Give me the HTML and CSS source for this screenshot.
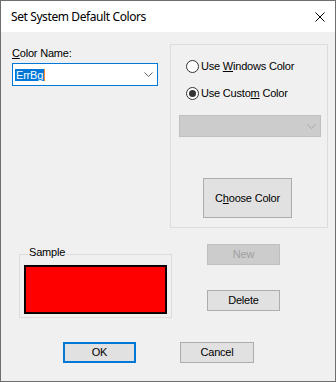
FILE: index.html
```html
<!DOCTYPE html>
<html lang="en">
<head>
  <meta charset="UTF-8" />
  <title>Set System Default Colors</title>
  <link rel="stylesheet" href="styles.css">
</head>
<body>

  <div class="window">
    <!-- TITLE BAR -->
    <div class="titlebar">
      <span class="title">Set System Default Colors</span>
      <svg class="close" width="10" height="10" viewBox="0 0 10 10">
        <path d="M0.5 0.5 L9.5 9.5 M9.5 0.5 L0.5 9.5" stroke="#000" stroke-width="1" fill="none" />
      </svg>
    </div>

    <div class="dialog-body">
      <!-- TOP: name combo + colour source group -->
      <div class="top-row">
        <div class="name-col">
          <div class="field-label"><u>C</u>olor Name:</div>
          <div class="combo focused">
            <span class="combo-text"><span class="selected">ErrBg</span><span class="caret"></span></span>
            <svg class="chevron" width="9" height="5" viewBox="0 0 9 5">
              <polyline points="0.5,0.5 4.5,4.5 8.5,0.5" stroke="#606060" fill="none" />
            </svg>
          </div>
        </div>

        <div class="group source-group">
          <div class="radio-row"><span class="radio"></span><span>Use <u>W</u>indows Color</span></div>
          <div class="radio-row second"><span class="radio checked"></span><span>Use Custo<u>m</u> Color</span></div>
          <div class="combo disabled">
            <svg class="chevron" width="9" height="5" viewBox="0 0 9 5">
              <polyline points="0.5,0.5 4.5,4.5 8.5,0.5" stroke="#a8a8a8" fill="none" />
            </svg>
          </div>
          <button class="btn choose">C<u>h</u>oose Color</button>
        </div>
      </div>

      <!-- MIDDLE: sample + new/delete -->
      <div class="mid-row">
        <div class="group sample-group">
          <span class="group-label">Sample</span>
          <div class="swatch"></div>
        </div>
        <div class="side-buttons">
          <button class="btn" disabled>New</button>
          <button class="btn">Delete</button>
        </div>
      </div>

      <!-- BOTTOM: OK / Cancel -->
      <div class="bottom-row">
        <button class="btn default">OK</button>
        <button class="btn cancel">Cancel</button>
      </div>
    </div>
  </div>

</body>
</html>
```

FILE: styles.css
```css
* {
  margin: 0;
  padding: 0;
  box-sizing: border-box;
}

body {
  background: #ffffff;
  font-family: "Liberation Sans", Arial, sans-serif;
  font-size: 11px;
  line-height: 13px;
  letter-spacing: -0.2px;
  color: #000;
}

u {
  text-decoration: underline;
  text-underline-offset: 1px;
}

.window {
  width: 336px;
  height: 382px;
  border: 1px solid #6e6e6e;
  background: #f0f0f0;
}

.titlebar {
  height: 31px;
  background: #ffffff;
  display: flex;
  align-items: center;
  justify-content: space-between;
  padding: 0 10px 0 10px;
}

.title {
  font-family: "Segoe UI", "Noto Sans", sans-serif;
  font-size: 12px;
  letter-spacing: -0.4px;
}

.dialog-body {
  padding: 12px 7px 0 11px;
}

/* top row */
.top-row {
  display: flex;
  gap: 12px;
}

.name-col {
  width: 146px;
  padding-top: 3px;
}

.field-label {
  height: 13px;
}

.combo {
  display: flex;
  align-items: center;
  justify-content: space-between;
  background: #fff;
  border: 1px solid #7a7a7a;
}

.combo.focused {
  margin-top: 3px;
  height: 23px;
  border-color: #0078d7;
  padding: 0 4px 0 2px;
}

.combo-text {
  display: flex;
  align-items: center;
}

.selected {
  background: #0078d7;
  color: #fff;
  padding: 0 1px;
  line-height: 12px;
}

.caret {
  width: 1px;
  height: 12px;
  background: #ff8728;
}

.combo.disabled {
  margin-top: 14px;
  width: 142px;
  height: 22px;
  background: #cccccc;
  border-color: #bfbfbf;
  justify-content: flex-end;
  padding-right: 4px;
}

.group {
  border: 1px solid #dcdcdc;
}

.source-group {
  width: 158px;
  height: 184px;
  padding: 13px 0 0 8px;
}

.radio-row {
  display: flex;
  align-items: center;
  gap: 2px;
  height: 16px;
  margin-left: 7px;
}

.radio-row.second {
  margin-top: 11px;
}

.radio {
  width: 13px;
  height: 13px;
  border: 1px solid #333;
  border-radius: 50%;
  background: #fff;
  display: flex;
  align-items: center;
  justify-content: center;
}

.radio.checked::after {
  content: "";
  width: 7px;
  height: 7px;
  border-radius: 50%;
  background: #333;
}

/* buttons */
.btn {
  display: block;
  width: 73px;
  height: 21px;
  background: #e1e1e1;
  border: 1px solid #adadad;
  font: inherit;
  letter-spacing: inherit;
  color: #000;
}

.btn:disabled {
  background: #cccccc;
  border-color: #bfbfbf;
  color: #a0a0a0;
}

.btn.choose {
  width: 89px;
  height: 40px;
  margin: 41px 0 0 24px;
}

.btn.default {
  border: 2px solid #0078d7;
}

/* middle row */
.mid-row {
  display: flex;
  align-items: flex-start;
  margin-top: 16px;
}

.sample-group {
  position: relative;
  width: 153px;
  height: 64px;
  margin: 10px 0 0 7px;
  padding: 10px 4px 3px 4px;
}

.group-label {
  position: absolute;
  top: -9px;
  left: 8px;
  padding: 0 1px;
  background: #f0f0f0;
}

.swatch {
  height: 49px;
  background: #ff0000;
  border: 1px solid #000;
  box-shadow: inset 0 0 0 1px #1a0000;
}

.side-buttons {
  display: flex;
  flex-direction: column;
  gap: 25px;
  margin-left: 35px;
}

/* bottom row */
.bottom-row {
  display: flex;
  gap: 44px;
  margin: 24px 0 0 51px;
}

.btn.cancel {
  width: 74px;
}
```
